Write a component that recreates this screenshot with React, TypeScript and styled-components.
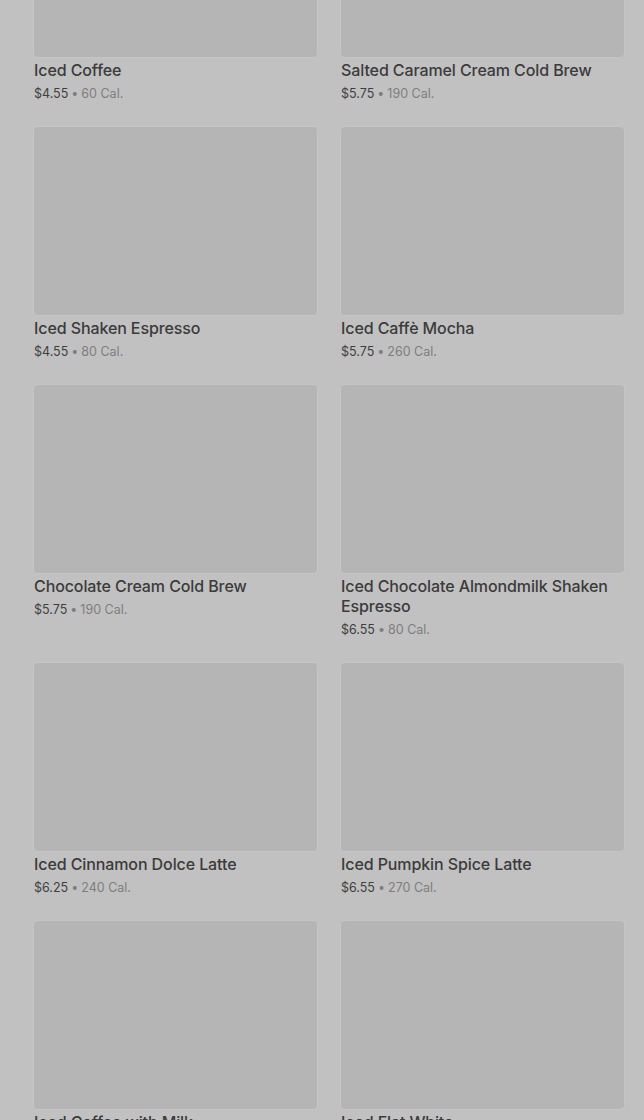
import styled, { createGlobalStyle } from 'styled-components';

const GlobalStyle = createGlobalStyle`
  body {
    margin: 0;
    background: #c1c1c1;
    font-family: Inter, Roboto, "Noto Sans", sans-serif;
    overflow: hidden;
  }
`;

const Page = styled.main`
  height: 1120px;
  overflow: hidden;
  padding: 0 20px 0 34px;
`;

const Grid = styled.div`
  display: grid;
  grid-template-columns: 1fr 1fr;
  column-gap: 24px;
  row-gap: 23px;
  margin-top: -131px;
`;

const Card = styled.article`
  display: flex;
  flex-direction: column;
`;

const Thumb = styled.div`
  height: 188px;
  border-radius: 4px;
  background: #b5b5b5;
  box-shadow: 0 0 0 1px rgba(255, 255, 255, 0.08);
`;

const Title = styled.h3`
  margin: 3px 0 0;
  font-size: 16px;
  line-height: 20px;
  font-weight: 500;
  color: #3b3b3b;
  letter-spacing: -0.1px;
`;

const Meta = styled.p`
  margin: 4px 0 0;
  font-size: 12.5px;
  line-height: 20px;
  color: #7e7e7e;
`;

const Price = styled.span`
  color: #3f3f3f;
`;

const Dot = styled.span`
  margin: 0 3px;
`;

interface Drink {
  name: string;
  price: string;
  cal: number;
}

const drinks: Drink[] = [
  { name: 'Iced Coffee', price: '$4.55', cal: 60 },
  { name: 'Salted Caramel Cream Cold Brew', price: '$5.75', cal: 190 },
  { name: 'Iced Shaken Espresso', price: '$4.55', cal: 80 },
  { name: 'Iced Caffè Mocha', price: '$5.75', cal: 260 },
  { name: 'Chocolate Cream Cold Brew', price: '$5.75', cal: 190 },
  { name: 'Iced Chocolate Almondmilk Shaken Espresso', price: '$6.55', cal: 80 },
  { name: 'Iced Cinnamon Dolce Latte', price: '$6.25', cal: 240 },
  { name: 'Iced Pumpkin Spice Latte', price: '$6.55', cal: 270 },
  { name: 'Iced Coffee with Milk', price: '$4.25', cal: 80 },
  { name: 'Iced Flat White', price: '$5.95', cal: 180 },
];

const App: React.FC = () => (
  <>
    <GlobalStyle />
    <Page>
      <Grid>
        {drinks.map((d) => (
          <Card key={d.name}>
            <Thumb />
            <Title>{d.name}</Title>
            <Meta>
              <Price>{d.price}</Price>
              <Dot>•</Dot>
              {d.cal} Cal.
            </Meta>
          </Card>
        ))}
      </Grid>
    </Page>
  </>
);

export default App;
